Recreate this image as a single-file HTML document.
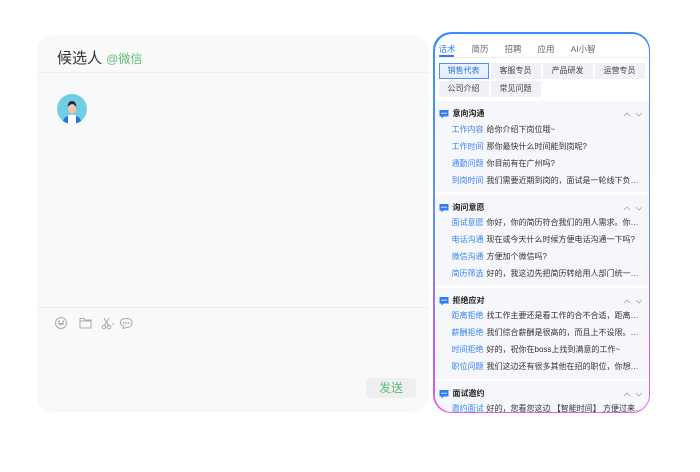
<!DOCTYPE html>
<html><head><meta charset="utf-8"><style>
*{margin:0;padding:0;box-sizing:border-box}
body{width:700px;height:472px;background:#fff;font-family:"Liberation Sans","Noto Sans CJK SC",sans-serif;position:relative;overflow:hidden}
.card{position:absolute;left:37px;top:35px;width:392px;height:377px;background:#f9f9fa;border-radius:16px}
.hd{position:absolute;left:20px;top:12px;font-size:15px;color:#333}
.hd span{font-size:12px;color:#5bbd72}
.l1{position:absolute;left:0;right:0;top:37px;height:1px;background:#eee}
.l2{position:absolute;left:0;right:0;top:272px;height:1px;background:#eee}
.av{position:absolute;left:20px;top:59px;width:30px;height:30px;border-radius:50%;background:#6fcde6;overflow:hidden}
.send{position:absolute;left:329px;top:343px;width:50px;height:20px;background:#efeff1;border-radius:4px;color:#5bbd72;font-size:12px;text-align:center;line-height:20px}
.pn{position:absolute;left:433px;top:32px;width:217px;height:381px;border-radius:18px;padding:1.5px;background:linear-gradient(180deg,#3d8cff 0%,#6e8cff 55%,#c85cf0 85%,#e060e8 100%)}
.in{width:100%;height:100%;background:#fff;border-radius:17px;overflow:hidden;position:relative}
.tabs{position:absolute;top:9px;left:4px;font-size:8.5px;color:#666;white-space:nowrap}
.tabs b{font-weight:normal;display:inline-block;margin-right:16px}
.tabs b.a{color:#2f7cf6}
.ul{position:absolute;left:4px;top:21px;width:15px;height:2px;background:#2f7cf6}
.sep{position:absolute;left:0;right:0;top:23px;height:1px;background:#eee}
.btn{position:absolute;height:16px;background:#f0f1f4;font-size:8px;color:#444;text-align:center;line-height:16px;width:50px}
.btn.a{background:#e8f1ff;border:1px solid #4f8ef7;color:#2f6fd8;line-height:14px}
.sec{position:absolute;left:0;right:0;background:#f6f7fa}
.st{position:absolute;left:18px;font-size:8px;color:#222;font-weight:bold}
.ic{position:absolute;left:4px;width:10px;height:10px}
.ar{position:absolute;right:6px;width:20px;height:6px}
.it{position:absolute;left:17px;font-size:8px;color:#333;white-space:nowrap;width:194px;overflow:hidden;text-overflow:ellipsis}
.it i{font-style:normal;color:#3b87f0;margin-right:3px}
</style></head><body>
<div class="card">
<div class="hd">候选人 <span>@微信</span></div>
<div class="l1"></div>
<div class="av"><svg width="30" height="30"><path d="M5 30 Q6 22 15 21 Q24 22 25 30Z" fill="#2c6fe0"/><rect x="11" y="21" width="8" height="9" fill="#fff"/><ellipse cx="15" cy="15" rx="4" ry="5" fill="#f6c3a8"/><path d="M10.5 13 Q11 7 15 7 Q19 7 19.5 13 Q17 10 15 10 Q12 11 10.5 13Z" fill="#1d2a4a"/></svg></div>
<div class="l2"></div>
<svg style="position:absolute;left:17px;top:280px" width="100" height="16" fill="none" stroke="#aaa" stroke-width="1">
<circle cx="7" cy="8" r="5.5"/><path d="M4.5 8.5 Q7 11.5 9.5 8.5Z"/><circle cx="5" cy="6.5" r=".5"/><circle cx="9" cy="6.5" r=".5"/>
<path d="M26 3.5h4l1 1.5h6v8h-11z M26 6h11"/>
<circle cx="50" cy="12" r="1.8"/><circle cx="55" cy="12" r="1.8"/><path d="M50.5 10.5 L55 3 M54.5 10.5 L50 3 M58 9h2"/>
<path d="M72 3.5 Q78 3 78 8 Q78 12.5 72 12.5 L69 13.5 L69.5 11 Q66 9.5 66.5 8 Q66 3.5 72 3.5Z"/><circle cx="69.5" cy="8" r=".4"/><circle cx="72" cy="8" r=".4"/><circle cx="74.5" cy="8" r=".4"/>
</svg>
<div class="send">发送</div>
</div>
<div class="pn"><div class="in">
<div class="tabs"><b class="a">话术</b><b>简历</b><b>招聘</b><b>应用</b><b>AI小智</b></div>
<div class="ul"></div><div class="sep"></div>
<div class="btn a" style="left:4px;top:29px">销售代表</div>
<div class="btn" style="left:56px;top:29px">客服专员</div>
<div class="btn" style="left:108px;top:29px">产品研发</div>
<div class="btn" style="left:160px;top:29px">运营专员</div>
<div class="btn" style="left:4px;top:47px">公司介绍</div>
<div class="btn" style="left:56px;top:47px">常见问题</div>

<div class="sec" style="top:67px;height:91px">
<svg class="ic" style="top:8px" viewBox="0 0 10 10"><path d="M0.5 1h9v6.5h-5l-2 2v-2h-2z" fill="#2f7cf6"/><circle cx="3" cy="4.3" r=".7" fill="#fff"/><circle cx="5" cy="4.3" r=".7" fill="#fff"/><circle cx="7" cy="4.3" r=".7" fill="#fff"/></svg>
<div class="st" style="top:7px">意向沟通</div><svg class="ar" style="top:10px" fill="none" stroke="#aaa" stroke-width=".8"><path d="M1 5l3-3 3 3M13 2l3 3 3-3"/></svg>
<div class="it" style="top:23px"><i>工作内容</i>给你介绍下岗位哦~</div>
<div class="it" style="top:40px"><i>工作时间</i>那你最快什么时间能到岗呢?</div>
<div class="it" style="top:57px"><i>通勤问题</i>你目前有在广州吗?</div>
<div class="it" style="top:74px"><i>到岗时间</i>我们需要近期到岗的，面试是一轮线下负责人面试哦</div>
</div>
<div class="sec" style="top:161px;height:91px">
<svg class="ic" style="top:8px" viewBox="0 0 10 10"><path d="M0.5 1h9v6.5h-5l-2 2v-2h-2z" fill="#2f7cf6"/><circle cx="3" cy="4.3" r=".7" fill="#fff"/><circle cx="5" cy="4.3" r=".7" fill="#fff"/><circle cx="7" cy="4.3" r=".7" fill="#fff"/></svg>
<div class="st" style="top:7px">询问意愿</div><svg class="ar" style="top:10px" fill="none" stroke="#aaa" stroke-width=".8"><path d="M1 5l3-3 3 3M13 2l3 3 3-3"/></svg>
<div class="it" style="top:22px"><i>面试意愿</i>你好，你的简历符合我们的用人需求。你这边有意向吗</div>
<div class="it" style="top:39px"><i>电话沟通</i>现在或今天什么时候方便电话沟通一下吗?</div>
<div class="it" style="top:56px"><i>微信沟通</i>方便加个微信吗?</div>
<div class="it" style="top:73px"><i>简历筛选</i>好的，我这边先把简历转给用人部门统一筛选</div>
</div>
<div class="sec" style="top:254px;height:91px">
<svg class="ic" style="top:8px" viewBox="0 0 10 10"><path d="M0.5 1h9v6.5h-5l-2 2v-2h-2z" fill="#2f7cf6"/><circle cx="3" cy="4.3" r=".7" fill="#fff"/><circle cx="5" cy="4.3" r=".7" fill="#fff"/><circle cx="7" cy="4.3" r=".7" fill="#fff"/></svg>
<div class="st" style="top:7px">拒绝应对</div><svg class="ar" style="top:10px" fill="none" stroke="#aaa" stroke-width=".8"><path d="M1 5l3-3 3 3M13 2l3 3 3-3"/></svg>
<div class="it" style="top:22px"><i>距离拒绝</i>找工作主要还是看工作的合不合适，距离远近其实</div>
<div class="it" style="top:39px"><i>薪酬拒绝</i>我们综合薪酬是很高的，而且上不设限。后续还有</div>
<div class="it" style="top:56px"><i>时间拒绝</i>好的，祝你在boss上找到满意的工作~</div>
<div class="it" style="top:73px"><i>职位问题</i>我们这边还有很多其他在招的职位，你想找什么</div>
</div>
<div class="sec" style="top:347px;height:40px">
<svg class="ic" style="top:8px" viewBox="0 0 10 10"><path d="M0.5 1h9v6.5h-5l-2 2v-2h-2z" fill="#2f7cf6"/><circle cx="3" cy="4.3" r=".7" fill="#fff"/><circle cx="5" cy="4.3" r=".7" fill="#fff"/><circle cx="7" cy="4.3" r=".7" fill="#fff"/></svg>
<div class="st" style="top:7px">面试邀约</div><svg class="ar" style="top:10px" fill="none" stroke="#aaa" stroke-width=".8"><path d="M1 5l3-3 3 3M13 2l3 3 3-3"/></svg>
<div class="it" style="top:22px"><i>邀约面试</i>好的，您看您这边 【智能时间】 方便过来面试吗</div>
</div>
</div></div>
</body></html>
